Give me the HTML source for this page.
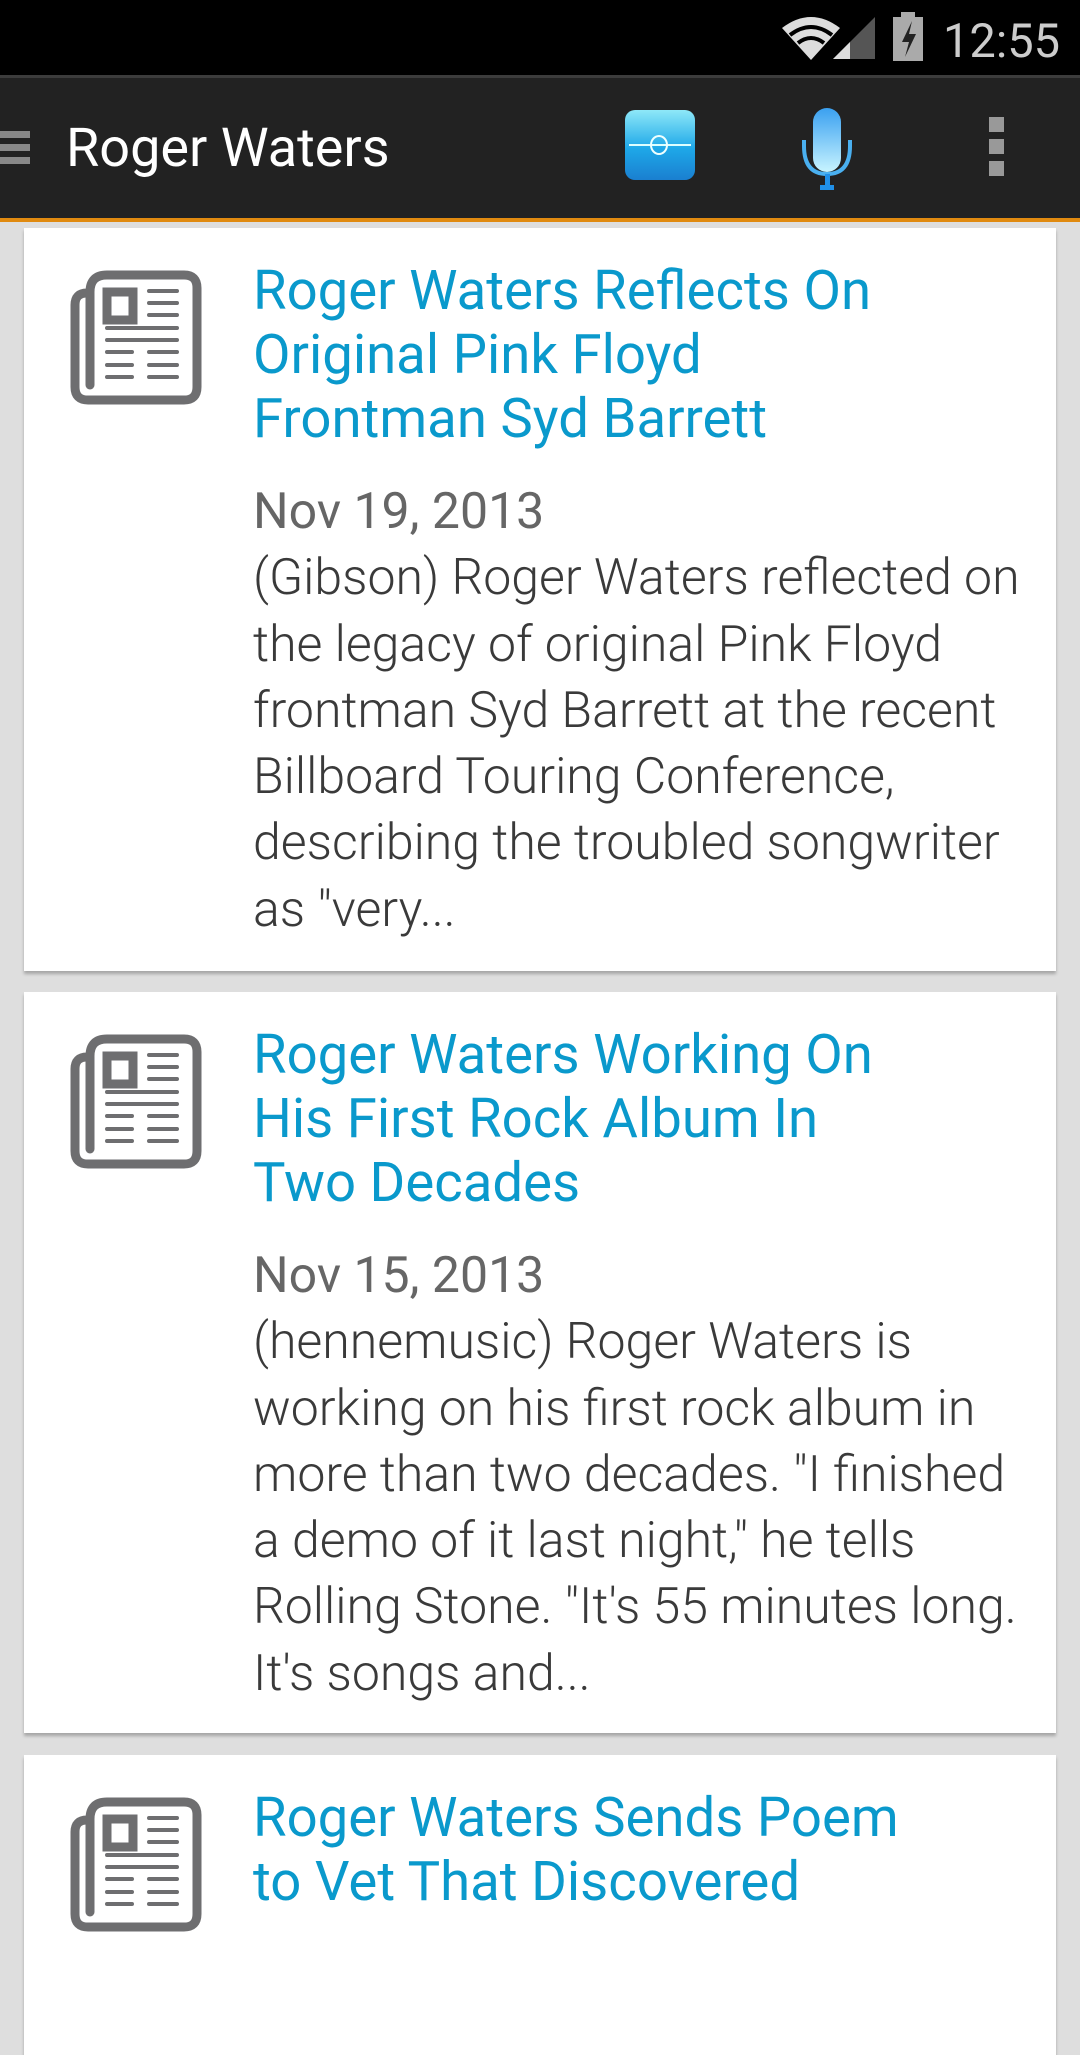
<!DOCTYPE html>
<html><head><meta charset="utf-8"><style>
*{margin:0;padding:0;box-sizing:border-box}
body{width:1080px;height:1920px;overflow:hidden;background:#dedede;font-family:"Roboto","Liberation Sans",sans-serif;position:relative}
.status{position:absolute;left:0;top:0;width:1080px;height:75px;background:#000}
.bar{position:absolute;left:0;top:75px;width:1080px;height:145px;background:#222;border-top:3px solid #3c3c3c}
.orange{position:absolute;left:0;top:218px;width:1080px;height:4px;background:#e08a10}
.card{position:absolute;left:24px;width:1032px;background:#fff;box-shadow:0 3px 3px rgba(0,0,0,0.25)}
.icon{position:absolute;left:46px;top:42px}
.t{position:absolute;left:229px;font-size:54.5px;line-height:64px;color:#0a99cc;white-space:nowrap}
.b{position:absolute;left:229px;font-size:50px;line-height:66.3px;color:#3a3a3a;white-space:nowrap;font-weight:300}
.b .d{color:#666;font-weight:400}
</style></head><body>
<div class="status">
<svg style="position:absolute;left:780px;top:14px" width="100" height="46" viewBox="0 0 100 46">
<path d="M2 14 Q31 -8 60 14 L31 46 Z" fill="#ddd"/>
<path d="M10 21 Q31 5 52 21" stroke="#000" stroke-width="4" fill="none"/>
<path d="M18 29 Q31 19 44 29" stroke="#000" stroke-width="4" fill="none"/>
<path d="M53 45 L95 3 L95 45 Z" fill="#555"/>
<path d="M53 45 L70 28 L70 45 Z" fill="#ddd"/>
</svg>
<svg style="position:absolute;left:892px;top:12px" width="32" height="50" viewBox="0 0 32 50">
<rect x="9" y="0" width="14" height="6" fill="#aaa"/><rect x="1" y="5" width="30" height="44" fill="#aaa"/>
<path d="M20 9 L10 30 L17 30 L13 45 L24 22 L17 22 Z" fill="#222"/>
</svg>
<div style="position:absolute;left:943px;top:12px;font-size:47px;color:#ccc;line-height:60px">12:55</div>
</div>
<div class="bar">
<div style="position:absolute;left:0;top:53px;width:30px;height:7px;background:#888"></div>
<div style="position:absolute;left:0;top:66px;width:30px;height:7px;background:#888"></div>
<div style="position:absolute;left:0;top:79px;width:30px;height:7px;background:#888"></div>
<div style="position:absolute;left:66px;top:36px;font-size:54px;line-height:70px;color:#fff">Roger Waters</div>
<div style="position:absolute;left:625px;top:32px;width:70px;height:70px;border-radius:10px;background:linear-gradient(#8ee8f8,#1ea8e8 55%,#1a7fd0)">
<div style="position:absolute;left:4px;top:34px;width:62px;height:2px;background:#dff"></div>
<div style="position:absolute;left:25px;top:25px;width:18px;height:20px;border:2px solid #eff;border-radius:50%"></div></div>
<svg style="position:absolute;left:800px;top:28px" width="54" height="86" viewBox="0 0 54 86">
<defs><linearGradient id="g" x1="0" y1="0" x2="0" y2="1"><stop offset="0" stop-color="#3aa0f0"/><stop offset="1" stop-color="#c8f4ff"/></linearGradient></defs>
<rect x="13" y="2" width="28" height="64" rx="14" fill="url(#g)"/>
<path d="M4 34 L4 40 Q4 68 27 68 Q50 68 50 40 L50 34" stroke="#4ab0f0" stroke-width="4" fill="none"/>
<rect x="25" y="68" width="5" height="12" fill="#2090e8"/><rect x="20" y="79" width="14" height="5" fill="#2090e8"/>
</svg>
<div style="position:absolute;left:989px;top:39px;width:15px;height:15px;background:#999"></div>
<div style="position:absolute;left:989px;top:61px;width:15px;height:15px;background:#999"></div>
<div style="position:absolute;left:989px;top:83px;width:15px;height:15px;background:#999"></div>
</div>
<div class="orange"></div>

<svg width="0" height="0" style="position:absolute"><defs><g id="np" fill="none" stroke="#6e6e70" stroke-linecap="round">
<path d="M20 22 Q20 5 37 5 L114 5 Q127 5 127 18 L127 117 Q127 130 114 130 L18 130 Q5 130 5 117 L5 35 Q5 23 17 23 L20 23" stroke-width="9"/>
<path d="M20 23 L20 115" stroke-width="9"/>
<rect x="37" y="22" width="26" height="28" stroke-width="9" stroke-linecap="butt"/>
<path d="M79 21 H107 M79 33 H107 M79 45 H107 M37 58 H107 M37 70 H107 M37 82 H62 M79 82 H107 M37 95 H62 M79 95 H107 M37 107 H62 M79 107 H107" stroke-width="4"/>
</g></defs></svg>

<div class="card" style="top:228px;height:743px">
<svg class="icon" width="132" height="136" viewBox="0 0 132 136"><use href="#np"/></svg>
<div class="t" style="top:31px">Roger Waters Reflects On<br>Original Pink Floyd<br>Frontman Syd Barrett</div>
<div class="b" style="top:251px"><span class="d">Nov 19, 2013</span><br>(Gibson) Roger Waters reflected on<br>the legacy of original Pink Floyd<br>frontman Syd Barrett at the recent<br>Billboard Touring Conference,<br>describing the troubled songwriter<br>as "very...</div>
</div>

<div class="card" style="top:992px;height:741px">
<svg class="icon" width="132" height="136" viewBox="0 0 132 136"><use href="#np"/></svg>
<div class="t" style="top:31px">Roger Waters Working On<br>His First Rock Album In<br>Two Decades</div>
<div class="b" style="top:251px"><span class="d">Nov 15, 2013</span><br>(hennemusic) Roger Waters is<br>working on his first rock album in<br>more than two decades. "I finished<br>a demo of it last night," he tells<br>Rolling Stone. "It's 55 minutes long.<br>It's songs and...</div>
</div>

<div class="card" style="top:1755px;height:300px">
<svg class="icon" width="132" height="136" viewBox="0 0 132 136"><use href="#np"/></svg>
<div class="t" style="top:31px">Roger Waters Sends Poem<br>to Vet That Discovered</div>
</div>
</body></html>
